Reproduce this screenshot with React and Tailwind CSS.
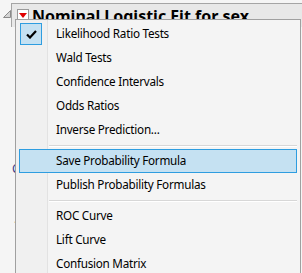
import React from "react";

const font = { fontFamily: '"Segoe UI", "Noto Sans", "Open Sans", sans-serif' };

function Sep() {
  return (
    <div className="h-[7px] flex items-center pl-[33px] pr-[3px]">
      <div className="h-[2px] w-full border-t border-[#d7d7d7] bg-white" />
    </div>
  );
}

function Item({ label, highlighted, checked }) {
  return (
    <div
      className={
        "relative mx-[3px] h-[24px] flex items-center pl-[37px] text-[11.7px] tracking-[-0.25px] text-black " +
        (highlighted ? "bg-[#c5e1f2] border border-[#2e9de0]" : "border border-transparent")
      }
    >
      {checked && (
        <div className="absolute left-0 top-0 w-[22px] h-[22px] bg-[#c5e1f2] border border-[#2e9de0] flex items-center justify-center">
          <svg width="11" height="9" viewBox="0 0 11 9">
            <path d="M1 4.5 L4 7.5 L10 1" fill="none" stroke="#000" strokeWidth="2.2" />
          </svg>
        </div>
      )}
      <span className="-ml-px">{label}</span>
    </div>
  );
}

export default function App() {
  return (
    <div className="relative w-[302px] h-[273px] overflow-hidden bg-[#f5f5f5]" style={font}>
      <div className="flex items-start pt-[3px]">
        <div className="w-[11px] pt-[7px] pl-[3px]">
          <svg width="8" height="8" viewBox="0 0 8 8">
            <path d="M7.5 0.5 L7.5 7.5 L0.5 7.5 Z" fill="#d4d4d4" stroke="#8a8a8a" strokeWidth="1" />
          </svg>
        </div>
        <div className="flex-1 h-[24px] bg-[#e8e8e8] border-t border-l border-[#a5a5a5] flex items-start pl-[5px] pt-[4px]">
          <div className="w-[12px] h-[12px] mt-[1px] bg-white border border-[#9a9a9a] flex items-center justify-center">
            <svg width="8" height="5" viewBox="0 0 8 5">
              <path d="M0 0 L8 0 L4 5 Z" fill="#e00000" />
            </svg>
          </div>
          <span className="ml-[3px] text-[16px] font-bold text-black leading-none">
            Nominal Logistic Fit for sex
          </span>
        </div>
      </div>
      <div className="pl-[12px] pt-[136px] text-[12px] text-[#3a3a8a] leading-none">
        <div>C</div>
        <div className="mt-[38px] pl-[2px] text-[#555]">.</div>
      </div>

      <div className="absolute left-[15px] top-[19px] w-[286px] h-[270px] border border-[#a0a0a0] pt-[2px] bg-[linear-gradient(to_right,#f0f0f0_31px,#e2e2e2_31px,#e2e2e2_32px,#f4f4f4_32px)]">
        <Item label="Likelihood Ratio Tests" checked />
        <Item label="Wald Tests" />
        <Item label="Confidence Intervals" />
        <Item label="Odds Ratios" />
        <Item label="Inverse Prediction..." />
        <Sep />
        <Item label="Save Probability Formula" highlighted />
        <Item label="Publish Probability Formulas" />
        <Sep />
        <Item label="ROC Curve" />
        <Item label="Lift Curve" />
        <Item label="Confusion Matrix" />
      </div>
    </div>
  );
}
